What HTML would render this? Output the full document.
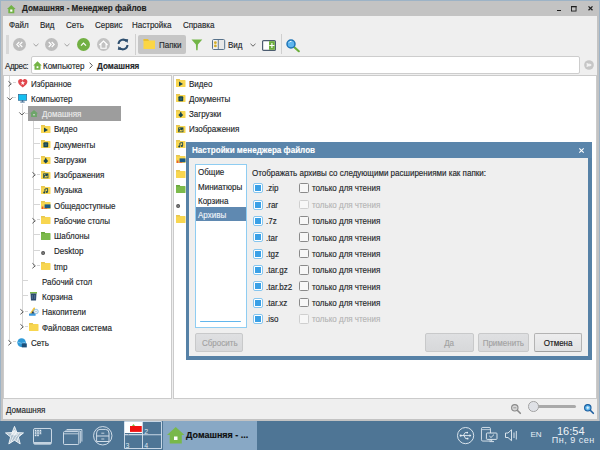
<!DOCTYPE html>
<html><head><meta charset="utf-8">
<style>
*{margin:0;padding:0;box-sizing:border-box}
html,body{width:600px;height:450px;overflow:hidden;background:#9db3c6;font-family:"Liberation Sans",sans-serif;font-size:8px;color:#232629}
.a{position:absolute}
.t{position:absolute;white-space:nowrap;line-height:10px;height:10px;font-size:8.8px;transform:scaleX(0.91);transform-origin:0 0;-webkit-text-stroke:0.15px currentColor}
.c{transform-origin:50% 0}
svg{position:absolute;overflow:visible}
</style></head><body>
<!-- window frame -->
<div class="a" style="left:1px;top:1px;width:598px;height:420px;background:#c3c3c3"></div>
<!-- title -->
<svg style="left:6.7px;top:4.6px" width="8.6" height="8.2" viewBox="0 0 8.6 8.2"><path d="M4.3 0 L8.6 3.9 L7.3 3.9 L7.3 8.2 L1.3 8.2 L1.3 3.9 L0 3.9 Z" fill="#72b245"/><rect x="3.2" y="4.5" width="2.2" height="2.2" fill="#fff"/></svg>
<div class="t" style="left:22px;top:3px;font-weight:bold;font-size:8.95px;color:#1e1e1e">Домашняя - Менеджер файлов</div>
<!-- min max close -->
<div class="a" style="left:557px;top:9.6px;width:4.2px;height:1.4px;background:#1e1e1e"></div>
<svg style="left:570.5px;top:5.8px" width="5.5" height="5.5" viewBox="0 0 5.5 5.5"><rect x="0.45" y="0.45" width="4.6" height="4.6" fill="none" stroke="#1e1e1e" stroke-width="0.9"/><rect x="0" y="0" width="5.5" height="1.3" fill="#1e1e1e"/></svg>
<svg style="left:587.5px;top:6.3px" width="5" height="4.6" viewBox="0 0 5 4.6"><path d="M0.5 0.4 L4.5 4.2 M4.5 0.4 L0.5 4.2" stroke="#1e1e1e" stroke-width="1.3"/></svg>
<!-- body -->
<div class="a" style="left:3px;top:16px;width:594px;height:403px;background:#efefef"></div>
<!-- menu -->
<div class="t" style="left:8.7px;top:20.2px">Файл</div>
<div class="t" style="left:40px;top:20.2px">Вид</div>
<div class="t" style="left:66px;top:20.2px">Сеть</div>
<div class="t" style="left:95px;top:20.2px">Сервис</div>
<div class="t" style="left:132px;top:20.2px">Настройка</div>
<div class="t" style="left:183px;top:20.2px">Справка</div>

<!-- toolbar -->
<div class="a" style="left:6px;top:34.7px;width:2.6px;height:19.3px;background:#d8d8d8"></div>
<svg style="left:13px;top:38px" width="13" height="13" viewBox="0 0 13 13"><circle cx="6.5" cy="6.5" r="6.5" fill="#bdbdbd"/><path d="M6.3 4 L3.8 6.5 L6.3 9 M9.3 4 L6.8 6.5 L9.3 9" fill="none" stroke="#fff" stroke-width="1.1"/></svg>
<svg style="left:33px;top:43px" width="6" height="4" viewBox="0 0 6 4"><path d="M0.5 0.8 L3 3.2 L5.5 0.8" fill="none" stroke="#9a9a9a" stroke-width="0.9"/></svg>
<svg style="left:45px;top:38px" width="13" height="13" viewBox="0 0 13 13"><circle cx="6.5" cy="6.5" r="6.5" fill="#bdbdbd"/><path d="M3.7 4 L6.2 6.5 L3.7 9 M6.7 4 L9.2 6.5 L6.7 9" fill="none" stroke="#fff" stroke-width="1.1"/></svg>
<svg style="left:64px;top:43px" width="6" height="4" viewBox="0 0 6 4"><path d="M0.5 0.8 L3 3.2 L5.5 0.8" fill="none" stroke="#9a9a9a" stroke-width="0.9"/></svg>
<svg style="left:76.5px;top:38px" width="13" height="13" viewBox="0 0 13 13"><circle cx="6.5" cy="6.5" r="6.5" fill="#72b043"/><path d="M4 7.6 L6.5 5.1 L9 7.6" fill="none" stroke="#fff" stroke-width="1.2"/></svg>
<svg style="left:96.5px;top:38px" width="13" height="13" viewBox="0 0 13 13"><circle cx="6.5" cy="6.5" r="6.5" fill="#c2c2c2"/><path d="M2.4 7 L6.5 3 L10.6 7 M3.9 5.8 L3.9 10.2 L9.1 10.2 L9.1 5.8" fill="none" stroke="#fff" stroke-width="1.15"/></svg>
<svg style="left:117px;top:38px" width="12" height="13" viewBox="0 0 12 13"><path d="M1.5 6 A4.6 4.6 0 0 1 9.6 3.3" fill="none" stroke="#2f4f6f" stroke-width="2"/><path d="M7.2 1 L11.2 1.2 L10.5 5 Z" fill="#2f4f6f"/><path d="M10.5 7 A4.6 4.6 0 0 1 2.4 9.7" fill="none" stroke="#2f4f6f" stroke-width="2"/><path d="M4.8 12 L0.8 11.8 L1.5 8 Z" fill="#2f4f6f"/></svg>
<div class="a" style="left:135px;top:34px;width:1px;height:21px;background:#cfcfcf"></div>
<div class="a" style="left:138px;top:35px;width:48px;height:18.5px;background:#c6c6c6;border-radius:2px"></div>
<svg style="left:143px;top:38px" width="13" height="12" viewBox="0 0 13 12"><path d="M0.5 1.5 L4.5 1.5 L5.5 2.5 L12 2.5 L12 11 L0.5 11 Z" fill="#fbd645"/><path d="M0.5 1 L4.8 1 L5.8 2 L5.8 3 L0.5 3 Z" fill="#e9c030"/></svg>
<div class="t" style="left:158.5px;top:39.5px">Папки</div>
<svg style="left:191px;top:38.5px" width="12" height="12" viewBox="0 0 12 12"><path d="M0.5 0.6 L11.3 0.6 L6.9 5.6 L6.6 11.2 L5.2 11.2 L4.9 5.6 Z" fill="#72b546"/></svg>
<svg style="left:212px;top:39px" width="13.2" height="11" viewBox="0 0 13.2 11"><rect x="0.5" y="0.5" width="12.2" height="10" rx="1.2" fill="#e8e8e8" stroke="#56708a" stroke-width="1"/><rect x="1" y="1" width="5" height="9" fill="#f0f0f0"/><line x1="6.3" y1="0.8" x2="6.3" y2="10.2" stroke="#56708a" stroke-width="0.9"/><circle cx="3.4" cy="3.7" r="1.4" fill="#d3ad2a"/><circle cx="3.4" cy="6.9" r="1.4" fill="#d3ad2a"/></svg>
<div class="t" style="left:227.5px;top:39.5px">Вид</div>
<svg style="left:249.5px;top:43px" width="6" height="4" viewBox="0 0 6 4"><path d="M0.5 0.8 L3 3.2 L5.5 0.8" fill="none" stroke="#555" stroke-width="0.9"/></svg>
<svg style="left:262px;top:39.5px" width="14" height="11" viewBox="0 0 14 11"><rect x="0.6" y="0.6" width="12.8" height="9.8" rx="1" fill="#fff" stroke="#4c5c70" stroke-width="1.2"/><rect x="7" y="1.2" width="5.8" height="8.6" fill="#6cae3c"/><path d="M9.9 3 L9.9 8 M7.4 5.5 L12.4 5.5" stroke="#fff" stroke-width="1.1"/></svg>
<div class="a" style="left:280.5px;top:34px;width:1px;height:20px;background:#cfcfcf"></div>
<svg style="left:286px;top:38.5px" width="14" height="13" viewBox="0 0 14 13"><path d="M7.5 7.5 L12.8 12.2" stroke="#6cae3c" stroke-width="2.2" stroke-linecap="round"/><circle cx="5" cy="5" r="4" fill="#5fb6ee" stroke="#1f74b6" stroke-width="1.5"/><path d="M3 3.6 A2.5 2.5 0 0 1 5.5 2.3" stroke="#fff" stroke-width="0.9" fill="none"/></svg>
<!-- address -->
<div class="t" style="left:5px;top:60.5px;letter-spacing:-0.35px">Адрес:</div>
<div class="a" style="left:30.5px;top:56px;width:549px;height:17.5px;background:#fff;border:1px solid #cdcdcd;border-radius:2px"></div>
<svg style="left:33px;top:60.5px" width="9" height="9" viewBox="0 0 9 9"><path d="M4.5 0.3 L8.8 4.4 L7.5 4.4 L7.5 8.7 L1.5 8.7 L1.5 4.4 L0.2 4.4 Z" fill="#74b445"/><rect x="3.6" y="5.3" width="1.8" height="1.8" fill="#fff"/></svg>
<div class="t" style="left:43px;top:60.5px">Компьютер</div>
<svg style="left:89px;top:62px" width="4" height="7" viewBox="0 0 4 7"><path d="M0.6 0.6 L3.3 3.5 L0.6 6.4" fill="none" stroke="#444" stroke-width="0.9"/></svg>
<div class="t" style="left:97px;top:60.5px;font-weight:bold;font-size:8.95px">Домашняя</div>
<svg style="left:584px;top:60px" width="10" height="10" viewBox="0 0 10 10"><circle cx="5" cy="5" r="4.85" fill="#c6c6c6"/><path d="M2.3 3.2 Q3.5 5 2.3 6.8 L4 6.8 Q5 5.8 5.5 5.8 L5.5 6.8 L7.8 5 L5.5 3.2 L5.5 4.2 Q5 4.2 4 3.2 Z" fill="#f2f2f2"/></svg>
<!-- panes -->
<div class="a" style="left:3px;top:75px;width:168.5px;height:323.5px;background:#fff;border:1px solid #cbcbcb"></div>
<div class="a" style="left:172.5px;top:75px;width:424px;height:323.5px;background:#fff;border:1px solid #cbcbcb"></div>
<!-- tree -->
<div class="a" style="left:9px;top:76.0px;width:1px;height:266.3px;background:#d6d6d6"></div>
<div class="a" style="left:21.5px;top:103.5px;width:1px;height:223.5px;background:#d6d6d6"></div>
<div class="a" style="left:33px;top:121.0px;width:1px;height:145.1px;background:#d6d6d6"></div>
<div class="a" style="left:34px;top:127.8px;width:6px;height:1px;background:#d6d6d6"></div>
<div class="a" style="left:34px;top:143.0px;width:6px;height:1px;background:#d6d6d6"></div>
<div class="a" style="left:34px;top:158.3px;width:6px;height:1px;background:#d6d6d6"></div>
<div class="a" style="left:37px;top:173.5px;width:3px;height:1px;background:#d6d6d6"></div>
<div class="a" style="left:34px;top:188.7px;width:6px;height:1px;background:#d6d6d6"></div>
<div class="a" style="left:34px;top:204.0px;width:6px;height:1px;background:#d6d6d6"></div>
<div class="a" style="left:37px;top:219.2px;width:3px;height:1px;background:#d6d6d6"></div>
<div class="a" style="left:34px;top:234.4px;width:6px;height:1px;background:#d6d6d6"></div>
<div class="a" style="left:34px;top:249.7px;width:6px;height:1px;background:#d6d6d6"></div>
<div class="a" style="left:37px;top:264.9px;width:3px;height:1px;background:#d6d6d6"></div>
<div class="a" style="left:22px;top:280.2px;width:6px;height:1px;background:#d6d6d6"></div>
<div class="a" style="left:22px;top:295.4px;width:6px;height:1px;background:#d6d6d6"></div>
<div class="a" style="left:25px;top:310.6px;width:3px;height:1px;background:#d6d6d6"></div>
<div class="a" style="left:25px;top:325.9px;width:3px;height:1px;background:#d6d6d6"></div>
<div class="a" style="left:13px;top:341.1px;width:3px;height:1px;background:#d6d6d6"></div>
<div class="a" style="left:13px;top:82.1px;width:3px;height:1px;background:#d6d6d6"></div>
<div class="a" style="left:13px;top:97.3px;width:3px;height:1px;background:#d6d6d6"></div>
<div class="a" style="left:25px;top:112.6px;width:3px;height:1px;background:#d6d6d6"></div>
<div class="a" style="left:27.5px;top:106px;width:93px;height:15px;background:#9d9d9d"></div>
<svg style="left:8px;top:80.5px" width="4" height="6" viewBox="0 0 4 6"><path d="M0.4 0.3 L3.3 2.8 L0.4 5.3" fill="none" stroke="#4a4a4a" stroke-width="0.9"/></svg>
<svg style="left:17.6px;top:78.9px" width="9.5" height="8.6" viewBox="0 0 9.5 8.6"><path d="M4.75 8.5 C2.2 6.4 0.1 5 0.1 2.8 C0.1 1.1 1.3 0.1 2.6 0.1 C3.6 0.1 4.3 0.7 4.75 1.4 C5.2 0.7 5.9 0.1 6.9 0.1 C8.2 0.1 9.4 1.1 9.4 2.8 C9.4 5 7.3 6.4 4.75 8.5 Z" fill="#e2474d"/><path d="M4.75 1.6 L5.35 3.2 L7 3.25 L5.7 4.25 L6.15 5.9 L4.75 4.95 L3.35 5.9 L3.8 4.25 L2.5 3.25 L4.15 3.2 Z" fill="#fff"/></svg>
<div class="t" style="left:31px;top:78.7px;">Избранное</div>
<svg style="left:7px;top:96.9px" width="6" height="4" viewBox="0 0 6 4"><path d="M0.3 0.4 L2.9 3 L5.5 0.4" fill="none" stroke="#4a4a4a" stroke-width="0.9"/></svg>
<svg style="left:17.7px;top:93.9px" width="9" height="9" viewBox="0 0 9 9"><rect x="0.3" y="0.3" width="8.4" height="6" fill="#16bff0" stroke="#2a5f8a" stroke-width="0.6"/><rect x="3.8" y="6.3" width="1.4" height="1.4" fill="#2d5a85"/><rect x="2.3" y="7.6" width="4.4" height="0.9" fill="#2d5a85"/></svg>
<div class="t" style="left:31px;top:93.9px;">Компьютер</div>
<svg style="left:19px;top:112.2px" width="6" height="4" viewBox="0 0 6 4"><path d="M0.3 0.4 L2.9 3 L5.5 0.4" fill="none" stroke="#4a4a4a" stroke-width="0.9"/></svg>
<svg style="left:30px;top:110.3px" width="8" height="7" viewBox="0 0 8 7"><path d="M4 0 L8 3.5 L7 3.5 L7 7 L1 7 L1 3.5 L0 3.5 Z" fill="#6ea56a"/><rect x="3.3" y="4" width="1.4" height="1.4" fill="#ddd"/></svg>
<div class="t" style="left:42px;top:109.2px;color:#ebebeb">Домашняя</div>
<svg style="left:41.3px;top:125.0px" width="9.5" height="8" viewBox="0 0 9.5 8"><path d="M0 0.6 Q0 0 0.6 0 L3.4 0 L4.2 0.9 L8.9 0.9 Q9.5 0.9 9.5 1.5 L9.5 7.4 Q9.5 8 8.9 8 L0.6 8 Q0 8 0 7.4 Z" fill="#f8d650"/><path d="M0 0.6 Q0 0 0.6 0 L3.4 0 L4.2 0.9 L4.2 1.6 L0 1.6 Z" fill="#e6c650"/><path d="M3 2.6 L7 4.9 L3 7.2 Z" fill="#17464f"/></svg>
<div class="t" style="left:54px;top:124.4px;">Видео</div>
<svg style="left:41.3px;top:140.2px" width="9.5" height="8" viewBox="0 0 9.5 8"><path d="M0 0.6 Q0 0 0.6 0 L3.4 0 L4.2 0.9 L8.9 0.9 Q9.5 0.9 9.5 1.5 L9.5 7.4 Q9.5 8 8.9 8 L0.6 8 Q0 8 0 7.4 Z" fill="#f8d650"/><path d="M0 0.6 Q0 0 0.6 0 L3.4 0 L4.2 0.9 L4.2 1.6 L0 1.6 Z" fill="#e6c650"/><rect x="2.4" y="2.3" width="4.8" height="5" rx="0.9" fill="#17464f"/><rect x="3.6" y="3.5" width="2.4" height="2.6" rx="0.5" fill="#2f5f6c"/></svg>
<div class="t" style="left:54px;top:139.6px;">Документы</div>
<svg style="left:41.3px;top:155.5px" width="9.5" height="8" viewBox="0 0 9.5 8"><path d="M0 0.6 Q0 0 0.6 0 L3.4 0 L4.2 0.9 L8.9 0.9 Q9.5 0.9 9.5 1.5 L9.5 7.4 Q9.5 8 8.9 8 L0.6 8 Q0 8 0 7.4 Z" fill="#f8d650"/><path d="M0 0.6 Q0 0 0.6 0 L3.4 0 L4.2 0.9 L4.2 1.6 L0 1.6 Z" fill="#e6c650"/><path d="M4.75 2.5 L7.2 5 L4.75 7.5 L2.3 5 Z" fill="#17464f"/><rect x="4.25" y="1.8" width="1" height="2" fill="#17464f"/></svg>
<div class="t" style="left:54px;top:154.9px;">Загрузки</div>
<svg style="left:32px;top:171.9px" width="4" height="6" viewBox="0 0 4 6"><path d="M0.4 0.3 L3.3 2.8 L0.4 5.3" fill="none" stroke="#4a4a4a" stroke-width="0.9"/></svg>
<svg style="left:41.3px;top:170.7px" width="9.5" height="8" viewBox="0 0 9.5 8"><path d="M0 0.6 Q0 0 0.6 0 L3.4 0 L4.2 0.9 L8.9 0.9 Q9.5 0.9 9.5 1.5 L9.5 7.4 Q9.5 8 8.9 8 L0.6 8 Q0 8 0 7.4 Z" fill="#f8d650"/><path d="M0 0.6 Q0 0 0.6 0 L3.4 0 L4.2 0.9 L4.2 1.6 L0 1.6 Z" fill="#e6c650"/><rect x="2.2" y="2.4" width="5.2" height="4.8" fill="#17464f"/><path d="M3 6.4 L4.5 4.6 L5.5 5.6 L6.6 4.2 L6.6 6.4 Z" fill="#f8d650"/><circle cx="3.8" cy="3.6" r="0.6" fill="#f8d650"/></svg>
<div class="t" style="left:54px;top:170.1px;">Изображения</div>
<svg style="left:41.3px;top:185.9px" width="9.5" height="8" viewBox="0 0 9.5 8"><path d="M0 0.6 Q0 0 0.6 0 L3.4 0 L4.2 0.9 L8.9 0.9 Q9.5 0.9 9.5 1.5 L9.5 7.4 Q9.5 8 8.9 8 L0.6 8 Q0 8 0 7.4 Z" fill="#f8d650"/><path d="M0 0.6 Q0 0 0.6 0 L3.4 0 L4.2 0.9 L4.2 1.6 L0 1.6 Z" fill="#e6c650"/><path d="M3.9 6.3 L3.9 3 L6.6 2.5 L6.6 5.8" fill="none" stroke="#17464f" stroke-width="0.9"/><circle cx="3.2" cy="6.4" r="1" fill="#17464f"/><circle cx="5.9" cy="5.9" r="1" fill="#17464f"/></svg>
<div class="t" style="left:54px;top:185.3px;">Музыка</div>
<svg style="left:41.3px;top:201.2px" width="9.5" height="8" viewBox="0 0 9.5 8"><path d="M0 0.6 Q0 0 0.6 0 L3.4 0 L4.2 0.9 L8.9 0.9 Q9.5 0.9 9.5 1.5 L9.5 7.4 Q9.5 8 8.9 8 L0.6 8 Q0 8 0 7.4 Z" fill="#f8d650"/><path d="M0 0.6 Q0 0 0.6 0 L3.4 0 L4.2 0.9 L4.2 1.6 L0 1.6 Z" fill="#e6c650"/><rect x="3.6" y="3.4" width="5.9" height="3.8" fill="#1b5a86"/><rect x="0.8" y="5.5" width="1.6" height="2.5" fill="#e8553a"/><rect x="3.2" y="7.3" width="3" height="0.7" fill="#e8553a"/></svg>
<div class="t" style="left:54px;top:200.6px;">Общедоступные</div>
<svg style="left:32px;top:217.6px" width="4" height="6" viewBox="0 0 4 6"><path d="M0.4 0.3 L3.3 2.8 L0.4 5.3" fill="none" stroke="#4a4a4a" stroke-width="0.9"/></svg>
<svg style="left:41.3px;top:216.4px" width="9.5" height="8" viewBox="0 0 9.5 8"><path d="M0 0.6 Q0 0 0.6 0 L3.4 0 L4.2 0.9 L8.9 0.9 Q9.5 0.9 9.5 1.5 L9.5 7.4 Q9.5 8 8.9 8 L0.6 8 Q0 8 0 7.4 Z" fill="#f8d650"/><path d="M0 0.6 Q0 0 0.6 0 L3.4 0 L4.2 0.9 L4.2 1.6 L0 1.6 Z" fill="#e6c650"/></svg>
<div class="t" style="left:54px;top:215.8px;">Рабочие столы</div>
<svg style="left:41.3px;top:231.6px" width="9.5" height="8" viewBox="0 0 9.5 8"><path d="M0 0.6 Q0 0 0.6 0 L3.4 0 L4.2 0.9 L8.9 0.9 Q9.5 0.9 9.5 1.5 L9.5 7.4 Q9.5 8 8.9 8 L0.6 8 Q0 8 0 7.4 Z" fill="#7cba4b"/><path d="M0 0.6 Q0 0 0.6 0 L3.4 0 L4.2 0.9 L4.2 1.6 L0 1.6 Z" fill="#68a63a"/></svg>
<div class="t" style="left:54px;top:231.0px;">Шаблоны</div>
<svg style="left:41.1px;top:250.7px" width="4.2" height="4.2" viewBox="0 0 4.2 4.2"><circle cx="2.1" cy="2.1" r="2" fill="#505050"/><circle cx="2.1" cy="2.1" r="0.8" fill="#a0a0a0"/></svg>
<div class="t" style="left:54px;top:246.3px;">Desktop</div>
<svg style="left:32px;top:263.3px" width="4" height="6" viewBox="0 0 4 6"><path d="M0.4 0.3 L3.3 2.8 L0.4 5.3" fill="none" stroke="#4a4a4a" stroke-width="0.9"/></svg>
<svg style="left:41.3px;top:262.1px" width="9.5" height="8" viewBox="0 0 9.5 8"><path d="M0 0.6 Q0 0 0.6 0 L3.4 0 L4.2 0.9 L8.9 0.9 Q9.5 0.9 9.5 1.5 L9.5 7.4 Q9.5 8 8.9 8 L0.6 8 Q0 8 0 7.4 Z" fill="#f8d650"/><path d="M0 0.6 Q0 0 0.6 0 L3.4 0 L4.2 0.9 L4.2 1.6 L0 1.6 Z" fill="#e6c650"/></svg>
<div class="t" style="left:54px;top:261.5px;">tmp</div>
<div class="t" style="left:42.2px;top:276.8px;">Рабочий стол</div>
<svg style="left:30px;top:292.4px" width="7" height="8.5" viewBox="0 0 7 8.5"><rect x="0" y="0" width="7" height="1.6" fill="#7cb848"/><path d="M0.5 1.6 L6.5 1.6 L6 8.5 L1 8.5 Z" fill="#2b4a6e"/><path d="M2.3 3 L2.3 7 M4.7 3 L4.7 7" stroke="#7a9ab8" stroke-width="0.5"/></svg>
<div class="t" style="left:42.2px;top:292.0px;">Корзина</div>
<svg style="left:20px;top:309.0px" width="4" height="6" viewBox="0 0 4 6"><path d="M0.4 0.3 L3.3 2.8 L0.4 5.3" fill="none" stroke="#4a4a4a" stroke-width="0.9"/></svg>
<svg style="left:29px;top:307.2px" width="9.5" height="9" viewBox="0 0 9.5 9"><path d="M0.6 6.8 L4.6 0.7 Q5.4 0.1 6 0.8 L6 6.8 Z" fill="#f2c43c"/><path d="M2.2 6.8 L4.2 3.6 L5.6 6.8 Z" fill="#24364c"/><circle cx="7" cy="4.5" r="2.3" fill="#e9f0f6" stroke="#5aa6dc" stroke-width="0.6"/><circle cx="7" cy="4.5" r="0.6" fill="#9ab"/><rect x="0" y="6.6" width="6.6" height="2.2" rx="0.4" fill="#3a98de"/></svg>
<div class="t" style="left:42.2px;top:307.2px;">Накопители</div>
<svg style="left:20px;top:324.3px" width="4" height="6" viewBox="0 0 4 6"><path d="M0.4 0.3 L3.3 2.8 L0.4 5.3" fill="none" stroke="#4a4a4a" stroke-width="0.9"/></svg>
<svg style="left:29px;top:323.1px" width="9.5" height="8" viewBox="0 0 9.5 8"><path d="M0 0.6 Q0 0 0.6 0 L3.4 0 L4.2 0.9 L8.9 0.9 Q9.5 0.9 9.5 1.5 L9.5 7.4 Q9.5 8 8.9 8 L0.6 8 Q0 8 0 7.4 Z" fill="#f8d650"/><path d="M0 0.6 Q0 0 0.6 0 L3.4 0 L4.2 0.9 L4.2 1.6 L0 1.6 Z" fill="#e6c650"/></svg>
<div class="t" style="left:42.2px;top:322.5px;">Файловая система</div>
<svg style="left:8px;top:339.5px" width="4" height="6" viewBox="0 0 4 6"><path d="M0.4 0.3 L3.3 2.8 L0.4 5.3" fill="none" stroke="#4a4a4a" stroke-width="0.9"/></svg>
<svg style="left:17px;top:337.5px" width="10" height="10" viewBox="0 0 10 10"><circle cx="4.6" cy="4.6" r="4.3" fill="#2f9ad8"/><path d="M0.8 4.2 Q4.6 6.5 8.4 4.2" stroke="#a8d8f4" stroke-width="0.6" fill="none"/><rect x="4.8" y="5.4" width="5" height="4" fill="#1d4f7a"/></svg>
<div class="t" style="left:30.5px;top:337.7px;">Сеть</div>
<!-- list -->
<svg style="left:176px;top:79.3px" width="9.5" height="8" viewBox="0 0 9.5 8"><path d="M0 0.6 Q0 0 0.6 0 L3.4 0 L4.2 0.9 L8.9 0.9 Q9.5 0.9 9.5 1.5 L9.5 7.4 Q9.5 8 8.9 8 L0.6 8 Q0 8 0 7.4 Z" fill="#f8d650"/><path d="M0 0.6 Q0 0 0.6 0 L3.4 0 L4.2 0.9 L4.2 1.6 L0 1.6 Z" fill="#e6c650"/><path d="M3 2.6 L7 4.9 L3 7.2 Z" fill="#17464f"/></svg>
<div class="t" style="left:188.7px;top:78.7px;">Видео</div>
<svg style="left:176px;top:94.4px" width="9.5" height="8" viewBox="0 0 9.5 8"><path d="M0 0.6 Q0 0 0.6 0 L3.4 0 L4.2 0.9 L8.9 0.9 Q9.5 0.9 9.5 1.5 L9.5 7.4 Q9.5 8 8.9 8 L0.6 8 Q0 8 0 7.4 Z" fill="#f8d650"/><path d="M0 0.6 Q0 0 0.6 0 L3.4 0 L4.2 0.9 L4.2 1.6 L0 1.6 Z" fill="#e6c650"/><rect x="2.4" y="2.3" width="4.8" height="5" rx="0.9" fill="#17464f"/><rect x="3.6" y="3.5" width="2.4" height="2.6" rx="0.5" fill="#2f5f6c"/></svg>
<div class="t" style="left:188.7px;top:93.8px;">Документы</div>
<svg style="left:176px;top:109.5px" width="9.5" height="8" viewBox="0 0 9.5 8"><path d="M0 0.6 Q0 0 0.6 0 L3.4 0 L4.2 0.9 L8.9 0.9 Q9.5 0.9 9.5 1.5 L9.5 7.4 Q9.5 8 8.9 8 L0.6 8 Q0 8 0 7.4 Z" fill="#f8d650"/><path d="M0 0.6 Q0 0 0.6 0 L3.4 0 L4.2 0.9 L4.2 1.6 L0 1.6 Z" fill="#e6c650"/><path d="M4.75 2.5 L7.2 5 L4.75 7.5 L2.3 5 Z" fill="#17464f"/><rect x="4.25" y="1.8" width="1" height="2" fill="#17464f"/></svg>
<div class="t" style="left:188.7px;top:108.9px;">Загрузки</div>
<svg style="left:176px;top:124.6px" width="9.5" height="8" viewBox="0 0 9.5 8"><path d="M0 0.6 Q0 0 0.6 0 L3.4 0 L4.2 0.9 L8.9 0.9 Q9.5 0.9 9.5 1.5 L9.5 7.4 Q9.5 8 8.9 8 L0.6 8 Q0 8 0 7.4 Z" fill="#f8d650"/><path d="M0 0.6 Q0 0 0.6 0 L3.4 0 L4.2 0.9 L4.2 1.6 L0 1.6 Z" fill="#e6c650"/><rect x="2.2" y="2.4" width="5.2" height="4.8" fill="#17464f"/><path d="M3 6.4 L4.5 4.6 L5.5 5.6 L6.6 4.2 L6.6 6.4 Z" fill="#f8d650"/><circle cx="3.8" cy="3.6" r="0.6" fill="#f8d650"/></svg>
<div class="t" style="left:188.7px;top:124.0px;">Изображения</div>
<svg style="left:176px;top:139.7px" width="9.5" height="8" viewBox="0 0 9.5 8"><path d="M0 0.6 Q0 0 0.6 0 L3.4 0 L4.2 0.9 L8.9 0.9 Q9.5 0.9 9.5 1.5 L9.5 7.4 Q9.5 8 8.9 8 L0.6 8 Q0 8 0 7.4 Z" fill="#f8d650"/><path d="M0 0.6 Q0 0 0.6 0 L3.4 0 L4.2 0.9 L4.2 1.6 L0 1.6 Z" fill="#e6c650"/><path d="M3.9 6.3 L3.9 3 L6.6 2.5 L6.6 5.8" fill="none" stroke="#17464f" stroke-width="0.9"/><circle cx="3.2" cy="6.4" r="1" fill="#17464f"/><circle cx="5.9" cy="5.9" r="1" fill="#17464f"/></svg>
<svg style="left:176px;top:154.8px" width="9.5" height="8" viewBox="0 0 9.5 8"><path d="M0 0.6 Q0 0 0.6 0 L3.4 0 L4.2 0.9 L8.9 0.9 Q9.5 0.9 9.5 1.5 L9.5 7.4 Q9.5 8 8.9 8 L0.6 8 Q0 8 0 7.4 Z" fill="#f8d650"/><path d="M0 0.6 Q0 0 0.6 0 L3.4 0 L4.2 0.9 L4.2 1.6 L0 1.6 Z" fill="#e6c650"/><rect x="3.6" y="3.4" width="5.9" height="3.8" fill="#1b5a86"/><rect x="0.8" y="5.5" width="1.6" height="2.5" fill="#e8553a"/><rect x="3.2" y="7.3" width="3" height="0.7" fill="#e8553a"/></svg>
<svg style="left:176px;top:169.9px" width="9.5" height="8" viewBox="0 0 9.5 8"><path d="M0 0.6 Q0 0 0.6 0 L3.4 0 L4.2 0.9 L8.9 0.9 Q9.5 0.9 9.5 1.5 L9.5 7.4 Q9.5 8 8.9 8 L0.6 8 Q0 8 0 7.4 Z" fill="#f8d650"/><path d="M0 0.6 Q0 0 0.6 0 L3.4 0 L4.2 0.9 L4.2 1.6 L0 1.6 Z" fill="#e6c650"/></svg>
<svg style="left:176px;top:185.0px" width="9.5" height="8" viewBox="0 0 9.5 8"><path d="M0 0.6 Q0 0 0.6 0 L3.4 0 L4.2 0.9 L8.9 0.9 Q9.5 0.9 9.5 1.5 L9.5 7.4 Q9.5 8 8.9 8 L0.6 8 Q0 8 0 7.4 Z" fill="#7cba4b"/><path d="M0 0.6 Q0 0 0.6 0 L3.4 0 L4.2 0.9 L4.2 1.6 L0 1.6 Z" fill="#68a63a"/></svg>
<svg style="left:175.9px;top:204.3px" width="4.2" height="4.2" viewBox="0 0 4.2 4.2"><circle cx="2.1" cy="2.1" r="2" fill="#505050"/><circle cx="2.1" cy="2.1" r="0.8" fill="#a0a0a0"/></svg>
<svg style="left:176px;top:215.2px" width="9.5" height="8" viewBox="0 0 9.5 8"><path d="M0 0.6 Q0 0 0.6 0 L3.4 0 L4.2 0.9 L8.9 0.9 Q9.5 0.9 9.5 1.5 L9.5 7.4 Q9.5 8 8.9 8 L0.6 8 Q0 8 0 7.4 Z" fill="#f8d650"/><path d="M0 0.6 Q0 0 0.6 0 L3.4 0 L4.2 0.9 L4.2 1.6 L0 1.6 Z" fill="#e6c650"/></svg>
<!-- dialog -->
<div class="a" style="left:185.5px;top:141.8px;width:406px;height:218.5px;background:#5681a6"></div>
<div class="a" style="left:185.5px;top:141.8px;width:406px;height:16px;background:#5a85ab"></div>
<div class="t" style="left:191.7px;top:145px;font-weight:bold;font-size:8.9px;color:#fff">Настройки менеджера файлов</div>
<svg style="left:579px;top:147.8px" width="5" height="5" viewBox="0 0 5 5"><path d="M0.3 0.3 L4.7 4.7 M4.7 0.3 L0.3 4.7" stroke="#fff" stroke-width="1.1"/></svg>
<div class="a" style="left:189px;top:157.8px;width:399.3px;height:198.5px;background:#efefef"></div>
<div class="a" style="left:195.3px;top:164.2px;width:52px;height:163.8px;background:#fff;border:1px solid #8fcdf2"></div>
<div class="t" style="left:197.8px;top:167.4px;">Общие</div>
<div class="t" style="left:197.8px;top:181.6px;">Миниатюры</div>
<div class="t" style="left:197.8px;top:195.8px;">Корзина</div>
<div class="a" style="left:196.3px;top:207.4px;width:49.7px;height:13.4px;background:#5f89b1"></div>
<div class="t" style="left:197.8px;top:209.7px;color:#eef3f8">Архивы</div>
<div class="a" style="left:200px;top:320.6px;width:41px;height:1.6px;border-radius:1px;background:#62b6ec"></div>
<div class="a" style="left:195px;top:333px;width:48.3px;height:18.6px;background:linear-gradient(#dfe0e2,#d7d8da);border:1px solid #c8c9ca;border-radius:2px"></div>
<div class="t" style="left:201.6px;top:338.2px;color:#a2a2a2">Сбросить</div>
<div class="t" style="left:251.7px;top:167.8px;">Отображать архивы со следующими расширениями как папки:</div>
<div class="a" style="left:253px;top:183.2px;width:10px;height:10px;border:1px solid #86c6ef;border-radius:2px;background:#fff"></div>
<div class="a" style="left:255px;top:185.2px;width:6px;height:6px;background:#3aa0e6"></div>
<div class="t" style="left:266px;top:183.4px;">.zip</div>
<div class="a" style="left:299px;top:183.2px;width:9.5px;height:9.5px;border:1px solid #8a8a8a;border-radius:1.5px;background:#f7f7f7"></div>
<div class="t" style="left:312px;top:183.4px;">только для чтения</div>
<div class="a" style="left:253px;top:199.6px;width:10px;height:10px;border:1px solid #86c6ef;border-radius:2px;background:#fff"></div>
<div class="a" style="left:255px;top:201.6px;width:6px;height:6px;background:#3aa0e6"></div>
<div class="t" style="left:266px;top:199.8px;">.rar</div>
<div class="a" style="left:299px;top:199.6px;width:9.5px;height:9.5px;border:1px solid #cfcfcf;border-radius:1.5px;background:#f7f7f7"></div>
<div class="t" style="left:312px;top:199.8px;color:#b5b5b5">только для чтения</div>
<div class="a" style="left:253px;top:215.9px;width:10px;height:10px;border:1px solid #86c6ef;border-radius:2px;background:#fff"></div>
<div class="a" style="left:255px;top:217.9px;width:6px;height:6px;background:#3aa0e6"></div>
<div class="t" style="left:266px;top:216.2px;">.7z</div>
<div class="a" style="left:299px;top:215.9px;width:9.5px;height:9.5px;border:1px solid #8a8a8a;border-radius:1.5px;background:#f7f7f7"></div>
<div class="t" style="left:312px;top:216.2px;">только для чтения</div>
<div class="a" style="left:253px;top:232.3px;width:10px;height:10px;border:1px solid #86c6ef;border-radius:2px;background:#fff"></div>
<div class="a" style="left:255px;top:234.3px;width:6px;height:6px;background:#3aa0e6"></div>
<div class="t" style="left:266px;top:232.5px;">.tar</div>
<div class="a" style="left:299px;top:232.3px;width:9.5px;height:9.5px;border:1px solid #8a8a8a;border-radius:1.5px;background:#f7f7f7"></div>
<div class="t" style="left:312px;top:232.5px;">только для чтения</div>
<div class="a" style="left:253px;top:248.7px;width:10px;height:10px;border:1px solid #86c6ef;border-radius:2px;background:#fff"></div>
<div class="a" style="left:255px;top:250.7px;width:6px;height:6px;background:#3aa0e6"></div>
<div class="t" style="left:266px;top:248.9px;">.tgz</div>
<div class="a" style="left:299px;top:248.7px;width:9.5px;height:9.5px;border:1px solid #8a8a8a;border-radius:1.5px;background:#f7f7f7"></div>
<div class="t" style="left:312px;top:248.9px;">только для чтения</div>
<div class="a" style="left:253px;top:265.1px;width:10px;height:10px;border:1px solid #86c6ef;border-radius:2px;background:#fff"></div>
<div class="a" style="left:255px;top:267.1px;width:6px;height:6px;background:#3aa0e6"></div>
<div class="t" style="left:266px;top:265.3px;">.tar.gz</div>
<div class="a" style="left:299px;top:265.1px;width:9.5px;height:9.5px;border:1px solid #8a8a8a;border-radius:1.5px;background:#f7f7f7"></div>
<div class="t" style="left:312px;top:265.3px;">только для чтения</div>
<div class="a" style="left:253px;top:281.4px;width:10px;height:10px;border:1px solid #86c6ef;border-radius:2px;background:#fff"></div>
<div class="a" style="left:255px;top:283.4px;width:6px;height:6px;background:#3aa0e6"></div>
<div class="t" style="left:266px;top:281.6px;">.tar.bz2</div>
<div class="a" style="left:299px;top:281.4px;width:9.5px;height:9.5px;border:1px solid #8a8a8a;border-radius:1.5px;background:#f7f7f7"></div>
<div class="t" style="left:312px;top:281.6px;">только для чтения</div>
<div class="a" style="left:253px;top:297.8px;width:10px;height:10px;border:1px solid #86c6ef;border-radius:2px;background:#fff"></div>
<div class="a" style="left:255px;top:299.8px;width:6px;height:6px;background:#3aa0e6"></div>
<div class="t" style="left:266px;top:298.0px;">.tar.xz</div>
<div class="a" style="left:299px;top:297.8px;width:9.5px;height:9.5px;border:1px solid #8a8a8a;border-radius:1.5px;background:#f7f7f7"></div>
<div class="t" style="left:312px;top:298.0px;">только для чтения</div>
<div class="a" style="left:253px;top:314.2px;width:10px;height:10px;border:1px solid #86c6ef;border-radius:2px;background:#fff"></div>
<div class="a" style="left:255px;top:316.2px;width:6px;height:6px;background:#3aa0e6"></div>
<div class="t" style="left:266px;top:314.4px;">.iso</div>
<div class="a" style="left:299px;top:314.2px;width:9.5px;height:9.5px;border:1px solid #cfcfcf;border-radius:1.5px;background:#f7f7f7"></div>
<div class="t" style="left:312px;top:314.4px;color:#b5b5b5">только для чтения</div>
<div class="a" style="left:425.4px;top:333.2px;width:48.2px;height:18.4px;background:linear-gradient(#dfe0e2,#d7d8da);border:1px solid #c8c9ca;border-radius:2px"></div>
<div class="t c" style="left:425.4px;width:48.2px;text-align:center;top:337.8px;color:#a2a2a2">Да</div>
<div class="a" style="left:478px;top:333.2px;width:50.7px;height:18.4px;background:linear-gradient(#dfe0e2,#d7d8da);border:1px solid #c8c9ca;border-radius:2px"></div>
<div class="t c" style="left:478px;width:50.7px;text-align:center;top:337.8px;color:#a2a2a2">Применить</div>
<div class="a" style="left:534px;top:333.2px;width:48.2px;height:18.4px;background:linear-gradient(#ededee,#e1e2e3);border:1px solid #b3b3b3;border-bottom-color:#a0a0a0;border-radius:2px"></div>
<div class="t c" style="left:534px;width:48.2px;text-align:center;top:337.8px;color:#151515">Отмена</div>
<!-- status -->
<div class="t" style="left:6px;top:404.7px;">Домашняя</div>
<svg style="left:511px;top:404px" width="10" height="10" viewBox="0 0 10 10"><path d="M5.5 5.5 L9.3 9.3" stroke="#8a8a8a" stroke-width="1.6" stroke-linecap="round"/><circle cx="3.8" cy="3.8" r="3.2" fill="#d8d8d8" stroke="#8a8a8a" stroke-width="1.1"/><path d="M2.3 3.8 L5.3 3.8" stroke="#8a8a8a" stroke-width="0.8"/></svg>
<div class="a" style="left:536px;top:404.8px;width:40px;height:3px;background:#a9a9a9;border-radius:1.5px"></div>
<div class="a" style="left:528.3px;top:401px;width:10.5px;height:10.5px;background:#dfe1e6;border:1px solid #a4a4a4;border-radius:50%"></div>
<svg style="left:583.7px;top:404px" width="10" height="10" viewBox="0 0 10 10"><path d="M5.5 5.5 L9.3 9.3" stroke="#1a5c9e" stroke-width="1.6" stroke-linecap="round"/><circle cx="3.8" cy="3.8" r="3.2" fill="#5ab4ec" stroke="#1a5c9e" stroke-width="1.1"/><path d="M2.3 3.8 L5.3 3.8 M3.8 2.3 L3.8 5.3" stroke="#fff" stroke-width="0.8"/></svg>
<!-- taskbar -->
<div class="a" style="left:0;top:421px;width:600px;height:29px;background:#4e7595"></div>
<svg style="left:4.5px;top:426px" width="19" height="19" viewBox="0 0 19 19"><defs><clipPath id="sc"><path d="M9.5 0.4 L11.9 6.6 L18.5 6.9 L13.4 11 L15.2 17.9 L9.5 14.2 L3.8 17.9 L5.6 11 L0.5 6.9 L7.1 6.6 Z"/></clipPath></defs><path d="M9.5 0.4 L11.9 6.6 L18.5 6.9 L13.4 11 L15.2 17.9 L9.5 14.2 L3.8 17.9 L5.6 11 L0.5 6.9 L7.1 6.6 Z" fill="rgba(255,255,255,0.55)" stroke="#f4f8fb" stroke-width="0.9" stroke-linejoin="round"/><g clip-path="url(#sc)" stroke="#fff" stroke-width="0.7" fill="none"><path d="M5 18 Q8 10 12 5 M8 18 Q10 11 14 7 M11 18 Q12 12 16 8 M3 14 Q6 9 10 4"/><ellipse cx="9.5" cy="7" rx="3" ry="2.5" fill="rgba(255,255,255,0.6)" stroke="none"/></g></svg>
<svg style="left:33px;top:428.2px" width="19" height="16.6" viewBox="0 0 19 16.6"><rect x="0.5" y="0.5" width="18" height="15.6" rx="1.5" fill="none" stroke="#d9e4ee" stroke-width="0.9"/><rect x="0.9" y="14" width="17.2" height="2.2" fill="#c4d3e0"/><g fill="#e6eef5"><rect x="1.8" y="1.8" width="1.6" height="1.6"/><rect x="4.2" y="1.8" width="1.6" height="1.6"/><rect x="6.6" y="1.8" width="1.6" height="1.6"/><rect x="1.8" y="4.2" width="1.6" height="1.6"/><rect x="4.2" y="4.2" width="1.6" height="1.6"/><rect x="6.6" y="4.2" width="1.6" height="1.6"/><rect x="1.8" y="6.6" width="1.6" height="1.6"/><rect x="4.2" y="6.6" width="1.6" height="1.6"/></g><path d="M1.8 3.6 L8.5 3.6 M1.8 6 L8.5 6" stroke="#c8d6e2" stroke-width="0.5"/></svg>
<svg style="left:63px;top:429px" width="19.5" height="16" viewBox="0 0 19.5 16"><path d="M3.6 0.5 L18.9 0.5 L18.9 12.6" fill="none" stroke="#d9e4ee" stroke-width="0.9"/><path d="M2.2 2 L17.3 2 L17.3 14.2" fill="none" stroke="#d9e4ee" stroke-width="0.9"/><rect x="0.5" y="2.6" width="15.3" height="12.9" rx="1" fill="#4e7595" stroke="#d9e4ee" stroke-width="0.9"/><line x1="0.9" y1="4.8" x2="15.4" y2="4.8" stroke="#d9e4ee" stroke-width="0.8"/></svg>
<svg style="left:92.75px;top:425.6px" width="19.5" height="19.5" viewBox="0 0 19.5 19.5"><circle cx="9.75" cy="9.75" r="9.2" fill="none" stroke="#dfe8f0" stroke-width="0.9"/><path d="M3.6 15.5 L3.6 7 Q3.6 3.4 7 3.4 L12.6 3.4 Q16 3.4 16 7 L16 15.5 Z" fill="none" stroke="#dfe8f0" stroke-width="0.9"/><line x1="3.6" y1="10" x2="16" y2="10" stroke="#dfe8f0" stroke-width="0.9"/><line x1="8.3" y1="7.2" x2="11.3" y2="7.2" stroke="#dfe8f0" stroke-width="0.8"/><line x1="8.3" y1="13" x2="11.3" y2="13" stroke="#dfe8f0" stroke-width="0.8"/></svg>
<div class="a" style="left:124.4px;top:421.9px;width:18.1px;height:11.6px;background:#fff"></div>
<svg style="left:129.75px;top:423.6px" width="12" height="8" viewBox="0 0 12 8"><path d="M2 2 L3.5 0 L5 2 Z" fill="#7ab84a"/><rect x="0" y="2" width="11.75" height="5.9" fill="#f01010"/></svg>
<div class="a" style="left:124.4px;top:433.5px;width:18.1px;height:1.5px;background:#a4b4c4"></div>
<div class="a" style="left:127.5px;top:433.8px;width:1.2px;height:1px;background:#445"></div>
<svg style="left:124px;top:421px" width="38" height="28" viewBox="0 0 38 28"><path d="M0.5 0.5 L37.5 0.5 L37.5 27.5 L0.5 27.5 Z M18.5 0 L18.5 28 M0 13.75 L38 13.75" fill="none" stroke="#d6e2ee" stroke-width="0.9"/></svg>
<div class="t" style="transform:none;-webkit-text-stroke:0;left:144.2px;top:427.5px;color:#dde7f0;font-size:7px;line-height:8px;height:8px">2</div>
<div class="t" style="transform:none;-webkit-text-stroke:0;left:125.4px;top:441.5px;color:#dde7f0;font-size:7px;line-height:8px;height:8px">3</div>
<div class="t" style="transform:none;-webkit-text-stroke:0;left:144.2px;top:441.5px;color:#dde7f0;font-size:7px;line-height:8px;height:8px">4</div>
<div class="a" style="left:163px;top:421px;width:94px;height:29px;background:#88a8c5"></div>
<svg style="left:166.6px;top:427.4px" width="17.5" height="16.6" viewBox="0 0 17.5 16.6"><path d="M8.75 0 L17.5 8 L14.8 8 L14.8 16.6 L2.7 16.6 L2.7 8 L0 8 Z" fill="#78b84a"/><rect x="7" y="9.5" width="3.5" height="3.5" fill="#fff"/></svg>
<div class="t" style="left:186px;top:429.5px;font-weight:bold;font-size:9.9px;color:#0e0e0e">Домашняя - ...</div>
<svg style="left:456.9px;top:426.8px" width="17.2" height="17.2" viewBox="0 0 17.2 17.2"><circle cx="8.6" cy="8.6" r="8.1" fill="none" stroke="#e8eff5" stroke-width="0.9"/><path d="M3.6 8.6 L13 8.6 M6.3 8.6 L8.2 5.6 L9.8 5.6 M7 8.6 L8.6 11.6 L10.2 11.6" fill="none" stroke="#e8eff5" stroke-width="0.9"/><circle cx="3.7" cy="8.6" r="1.1" fill="#e8eff5"/><circle cx="10.2" cy="5.6" r="0.9" fill="#e8eff5"/><rect x="9.8" y="10.8" width="1.6" height="1.6" fill="#e8eff5"/><path d="M12.6 7.2 L14.4 8.6 L12.6 10 Z" fill="#e8eff5"/></svg>
<svg style="left:481px;top:427.3px" width="16.5" height="15.5" viewBox="0 0 16.5 15.5"><rect x="0.45" y="0.45" width="9" height="13.6" rx="1.3" fill="none" stroke="#e0e9f1" stroke-width="0.9"/><line x1="0.9" y1="2.6" x2="9" y2="2.6" stroke="#e0e9f1" stroke-width="0.7"/><rect x="5.4" y="6" width="10.6" height="6.4" rx="0.8" fill="#4e7595" stroke="#e8eff5" stroke-width="0.9"/><path d="M8.3 9 L10 10.5 L13 7.6" fill="none" stroke="#e8eff5" stroke-width="0.9"/><path d="M10.7 12.4 L10.7 14 M8.5 14.6 L13 14.6" stroke="#e8eff5" stroke-width="0.9"/></svg>
<svg style="left:505px;top:428.75px" width="12" height="12.5" viewBox="0 0 12 12.5"><path d="M0.5 4 L3 4 L6.5 0.8 L6.5 11.7 L3 8.5 L0.5 8.5 Z" fill="none" stroke="#e8eff5" stroke-width="0.9" stroke-linejoin="round"/><line x1="9" y1="3.5" x2="9" y2="9" stroke="#e8eff5" stroke-width="0.9"/><line x1="11.3" y1="2" x2="11.3" y2="10.5" stroke="#e8eff5" stroke-width="0.9"/></svg>
<div class="t" style="left:530.5px;top:430.2px;transform:none;-webkit-text-stroke:0;color:#e8eff5;font-size:8px">EN</div>
<div class="t" style="left:557px;top:424.5px;color:#f0f4f8;transform:none;-webkit-text-stroke:0;font-size:11px;line-height:12px;height:12px">16:54</div>
<div class="t" style="left:551.8px;top:435px;color:#e8eff5;font-size:9px;letter-spacing:0.5px;line-height:11px;height:11px;transform:none;-webkit-text-stroke:0;white-space:pre">Пн, 9 сен</div>
</body></html>
